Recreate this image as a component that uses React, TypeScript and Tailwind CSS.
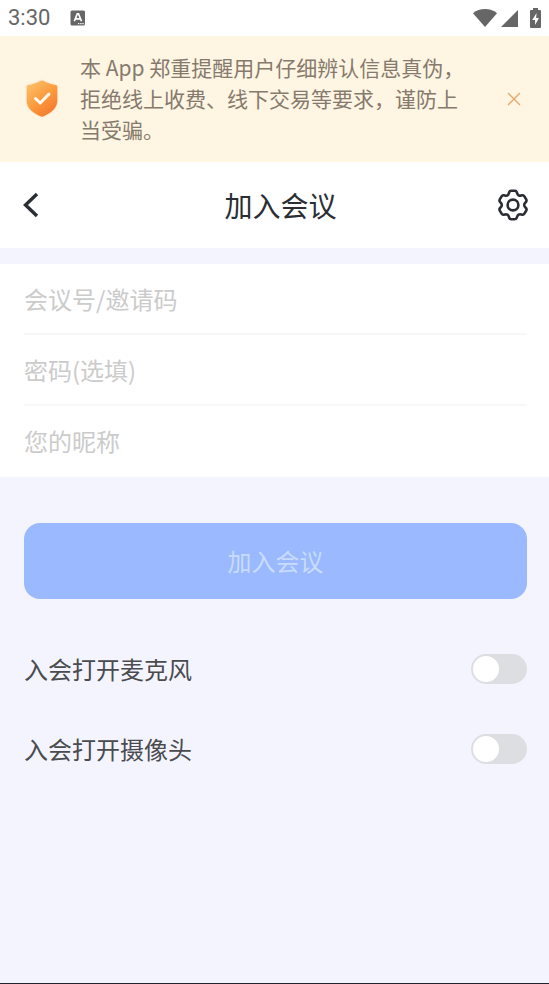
import { useState } from 'react'

type Point = [number, number]

const GEAR_SECTOR: Point[] = [[-3.4, -14.2], [3.4, -14.2], [4.5, -10.3], [6.7, -9.1]]

// Closed outline with six teeth, every corner rounded off
function gearPath(): string {
  const pts: Point[] = []
  for (let i = 0; i < 6; i++) {
    const a = (i * Math.PI) / 3
    for (const [x, y] of GEAR_SECTOR) {
      pts.push([x * Math.cos(a) - y * Math.sin(a), x * Math.sin(a) + y * Math.cos(a)])
    }
  }
  const toward = (from: Point, to: Point): Point => {
    const len = Math.hypot(to[0] - from[0], to[1] - from[1])
    const k = Math.min(1.6, len / 2) / len
    return [from[0] + (to[0] - from[0]) * k, from[1] + (to[1] - from[1]) * k]
  }
  const fmt = (p: Point) => `${p[0].toFixed(2)} ${p[1].toFixed(2)}`
  const parts = pts.map((p, i) => {
    const start = toward(p, pts[(i + pts.length - 1) % pts.length])
    const end = toward(p, pts[(i + 1) % pts.length])
    return `${i === 0 ? 'M' : 'L'}${fmt(start)} Q${fmt(p)} ${fmt(end)}`
  })
  return parts.join(' ') + 'Z'
}

function StatusBar() {
  return (
    <div className="flex h-9 items-center justify-between bg-white pl-2 pr-2 text-[#666]">
      <div className="flex items-center gap-5">
        <span className="font-[Roboto,sans-serif] text-[22px] leading-9">3:30</span>
        <svg width="16" height="16" viewBox="0 0 16 16" aria-hidden="true">
          <rect x="0.5" y="0.5" width="14.5" height="15" rx="1.5" fill="currentColor" />
          <path d="M4.3 11.2 7.3 3.8h1.2l3 7.4M5.4 8.8h5" fill="none" stroke="#fff" strokeWidth="1.7" />
          <path d="M8 13.6h1.3M10.2 13.6h1.3M12.4 13.6h1.3" stroke="#fff" strokeWidth="1.2" />
        </svg>
      </div>
      <div className="flex items-center" aria-hidden="true">
        <svg width="24" height="18" viewBox="0 0 24 18" className="mr-1">
          <path d="M12 18 0 4.2C3.4 1.4 7.5 0 12 0s8.600 1.400 12 4.200Z" fill="currentColor" />
        </svg>
        <svg width="17" height="17" viewBox="0 0 17 17" className="mr-3">
          <path d="M17 0v17H0Z" fill="currentColor" />
        </svg>
        <svg width="11" height="20" viewBox="0 0 11 20">
          <path d="M3 0h5v2h2q1 0 1 1v16q0 1-1 1H1q-1 0-1-1V3q0-1 1-1h2Z" fill="currentColor" />
          <path d="M6.600 5 2.200 12h2.900v5L8.900 10H6.100Z" fill="#fff" />
        </svg>
      </div>
    </div>
  )
}

function ShieldIcon() {
  return (
    <svg width="36" height="42" viewBox="0 0 36 42" className="shrink-0" aria-hidden="true">
      <defs>
        <linearGradient id="shield" x1="0.1" y1="0" x2="0.8" y2="1">
          <stop offset="0" stopColor="#fcc26a" />
          <stop offset="0.5" stopColor="#fb9d40" />
          <stop offset="1" stopColor="#f4752c" />
        </linearGradient>
      </defs>
      <path
        d="M18 2.500q.8 0 1.600.4c4 2 8 3.400 12 4.100 1.200.2 1.700.9 1.700 2v14c0 6.500-5.500 11.500-13.600 15.300q-1.700.8-3.400 0C8.200 34.500 2.700 29.500 2.700 23V9c0-1.100.5-1.800 1.700-2 4-.7 8-2.100 12-4.100q.8-.4 1.600-.4Z"
        fill="url(#shield)"
        stroke="#ffe9d0"
        strokeWidth="2"
        paintOrder="stroke"
      />
      <path
        d="m11.500 20.500 4.700 4.500 8.800-9"
        fill="none"
        stroke="#fff8ef"
        strokeWidth="3"
        strokeLinecap="round"
        strokeLinejoin="round"
      />
    </svg>
  )
}

function Notice({ onClose }: { onClose: () => void }) {
  return (
    <div className="flex items-center bg-[#fff5e3] pb-[17px] pl-6 pr-6 pt-4">
      <ShieldIcon />
      <p className="ml-5 flex-1 text-[21px] leading-[31px] text-[#857a6c]">
        本 App 郑重提醒用户仔细辨认信息真伪，拒绝线上收费、线下交易等要求，谨防上当受骗。
      </p>
      <button type="button" aria-label="关闭" onClick={onClose} className="ml-8 shrink-0 cursor-pointer p-1">
        <svg width="14" height="14" viewBox="0 0 14 14" stroke="#e6a767" strokeWidth="1.300">
          <path d="m1 1 12 12M13 1 1 13" />
        </svg>
      </button>
    </div>
  )
}

function TitleBar() {
  return (
    <header className="flex h-[86px] items-center justify-between bg-white px-5 text-[#2a2d33]">
      <button type="button" aria-label="返回" className="w-8 cursor-pointer">
        <svg width="22" height="26" viewBox="0 0 22 26" fill="none" stroke="currentColor" strokeWidth="3.400">
          <path d="M17 2 5.500 13 17 24" />
        </svg>
      </button>
      <h1 className="pl-3 text-[28px] leading-10">加入会议</h1>
      <button type="button" aria-label="设置" className="w-8 cursor-pointer">
        <svg width="32" height="32" viewBox="-16 -16 32 32" fill="none" stroke="currentColor" strokeWidth="2.600">
          <path d={gearPath()} />
          <circle r="5.400" />
        </svg>
      </button>
    </header>
  )
}

interface FieldProps {
  name: string
  label: string
  type?: string
}

function Field({ name, label, type = 'text' }: FieldProps) {
  return (
    <input
      name={name}
      type={type}
      placeholder={label}
      aria-label={label}
      className="block h-[71px] w-full border-b-2 border-[#f7f7f7] bg-transparent text-2xl text-[#333] placeholder:text-[#cbcbcb] focus:outline-none last:border-transparent"
    />
  )
}

interface SwitchRowProps {
  label: string
  checked: boolean
  onChange: (value: boolean) => void
}

function SwitchRow({ label, checked, onChange }: SwitchRowProps) {
  return (
    <label className="flex h-20 cursor-pointer items-center justify-between text-2xl text-[#4a4b4f]">
      {label}
      <input
        type="checkbox"
        role="switch"
        checked={checked}
        onChange={e => onChange(e.target.checked)}
        className="flex h-[30px] w-14 shrink-0 cursor-pointer appearance-none items-center rounded-full bg-[#dddee2] px-0.5 transition-colors before:size-[26px] before:rounded-full before:bg-white before:transition-transform checked:bg-[#3b7bfd] checked:before:translate-x-[26px]"
      />
    </label>
  )
}

export default function App() {
  const [showNotice, setShowNotice] = useState(true)
  const [mic, setMic] = useState(false)
  const [camera, setCamera] = useState(false)

  return (
    <div className="min-h-screen border-b border-[#20202c] bg-[#f4f4fe] font-['Noto_Sans_CJK_SC',sans-serif]">
      <StatusBar />
      {showNotice && <Notice onClose={() => setShowNotice(false)} />}
      <TitleBar />
      <form onSubmit={e => e.preventDefault()}>
        <div className="mt-4 bg-white pl-6 pr-[22px]">
          <Field name="room" label="会议号/邀请码" />
          <Field name="password" label="密码(选填)" type="password" />
          <Field name="nickname" label="您的昵称" />
        </div>
        <div className="pl-6 pr-[22px] pt-[46px]">
          <button
            type="submit"
            disabled
            className="h-[76px] w-full rounded-2xl bg-[#9ab9fe] text-2xl text-[#c8dcff]"
          >
            加入会议
          </button>
          <div className="mt-[30px]">
            <SwitchRow label="入会打开麦克风" checked={mic} onChange={setMic} />
            <SwitchRow label="入会打开摄像头" checked={camera} onChange={setCamera} />
          </div>
        </div>
      </form>
    </div>
  )
}
